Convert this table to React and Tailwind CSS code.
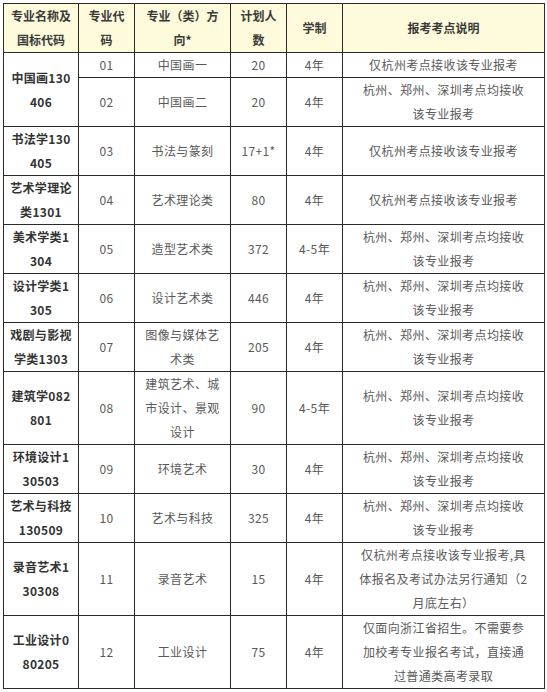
import React from "react";

const F = '"Noto Sans CJK SC", "Noto Sans", sans-serif';

const rows = [
  { name: ["中国画130", "406"], span: 2, code: "01", dir: ["中国画一"], n: "20", y: "4年", note: ["仅杭州考点接收该专业报考"] },
  { code: "02", dir: ["中国画二"], n: "20", y: "4年", note: ["杭州、郑州、深圳考点均接收", "该专业报考"] },
  { name: ["书法学130", "405"], code: "03", dir: ["书法与篆刻"], n: "17+1*", y: "4年", note: ["仅杭州考点接收该专业报考"] },
  { name: ["艺术学理论", "类1301"], code: "04", dir: ["艺术理论类"], n: "80", y: "4年", note: ["仅杭州考点接收该专业报考"] },
  { name: ["美术学类1", "304"], code: "05", dir: ["造型艺术类"], n: "372", y: "4-5年", note: ["杭州、郑州、深圳考点均接收", "该专业报考"] },
  { name: ["设计学类1", "305"], code: "06", dir: ["设计艺术类"], n: "446", y: "4年", note: ["杭州、郑州、深圳考点均接收", "该专业报考"] },
  { name: ["戏剧与影视", "学类1303"], code: "07", dir: ["图像与媒体艺", "术类"], n: "205", y: "4年", note: ["杭州、郑州、深圳考点均接收", "该专业报考"] },
  { name: ["建筑学082", "801"], code: "08", dir: ["建筑艺术、城", "市设计、景观", "设计"], n: "90", y: "4-5年", note: ["杭州、郑州、深圳考点均接收", "该专业报考"] },
  { name: ["环境设计1", "30503"], code: "09", dir: ["环境艺术"], n: "30", y: "4年", note: ["杭州、郑州、深圳考点均接收", "该专业报考"] },
  { name: ["艺术与科技", "130509"], code: "10", dir: ["艺术与科技"], n: "325", y: "4年", note: ["杭州、郑州、深圳考点均接收", "该专业报考"] },
  { name: ["录音艺术1", "30308"], code: "11", dir: ["录音艺术"], n: "15", y: "4年", note: ["仅杭州考点接收该专业报考,具", "体报名及考试办法另行通知（2", "月底左右）"] },
  { name: ["工业设计0", "80205"], code: "12", dir: ["工业设计"], n: "75", y: "4年", note: ["仅面向浙江省招生。不需要参", "加校考专业报名考试，直接通", "过普通类高考录取"] },
];

function Lines({ items }) {
  return items.map((t, i) => (
    <div key={i} className="whitespace-nowrap">{t}</div>
  ));
}

const td = "border border-[#2b2b2b] text-center align-middle p-0 leading-[24px]";
const body = td + " text-[#595959] tracking-[0.4px]";

export default function App() {
  return (
    <div className="bg-white w-[547px] h-[692px] pt-[3px] pl-[3px]" style={{ fontFamily: F }}>
      <table className="border-collapse table-fixed text-[12px] w-[541px]">
        <colgroup>
          <col className="w-[75px]" />
          <col className="w-[56px]" />
          <col className="w-[96px]" />
          <col className="w-[56px]" />
          <col className="w-[56px]" />
          <col className="w-[202px]" />
        </colgroup>
        <thead>
          <tr className="bg-[#fdfbdc] text-[#3a3a3a] font-bold">
            <th className={td}><Lines items={["专业名称及", "国标代码"]} /></th>
            <th className={td}><Lines items={["专业代", "码"]} /></th>
            <th className={td}><Lines items={["专业（类）方", "向*"]} /></th>
            <th className={td}><Lines items={["计划人", "数"]} /></th>
            <th className={td}>学制</th>
            <th className={td}>报考考点说明</th>
          </tr>
        </thead>
        <tbody>
          {rows.map((r, i) => (
            <tr key={i}>
              {r.name && (
                <td rowSpan={r.span || 1} className={td + " font-bold text-[#333] tracking-[0.3px]"}>
                  <Lines items={r.name} />
                </td>
              )}
              <td className={body}>{r.code}</td>
              <td className={body}><Lines items={r.dir} /></td>
              <td className={body}>{r.n}</td>
              <td className={body}>{r.y}</td>
              <td className={body}><Lines items={r.note} /></td>
            </tr>
          ))}
        </tbody>
      </table>
    </div>
  );
}
